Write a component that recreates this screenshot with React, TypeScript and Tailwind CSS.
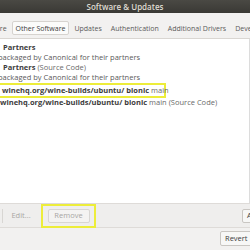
import React from "react";

const font = { fontFamily: '"Open Sans", "DejaVu Sans", sans-serif' };

function Tab({ label, active }: { label: string; active?: boolean }) {
  return (
    <div
      className={
        active
          ? "px-[3px] h-[14px] flex items-center rounded-[2px] border border-[#d6d3cf] bg-[#fbfbfa] text-[#3c3c3c]"
          : "px-[3px] h-[14px] flex items-center border border-transparent text-[#5a5a5a]"
      }
    >
      {label}
    </div>
  );
}

function Source({
  name,
  suffix,
  desc,
}: {
  name: string;
  suffix?: string;
  desc: string;
}) {
  return (
    <div className="flex flex-col">
      <div className="h-[10px] flex items-center pl-[3px]">
        <span className="font-bold text-[#3c3c3c]">{name}</span>
        {suffix && <span className="ml-[2px] text-[#6a6a6a]">{suffix}</span>}
      </div>
      <div className="h-[10px] flex items-center -ml-[2px] text-[#5a5a5a]">{desc}</div>
    </div>
  );
}

export default function App() {
  return (
    <div
      className="w-[250px] h-[250px] overflow-hidden flex flex-col bg-[#f2f1f0] text-[7.5px] leading-none"
      style={font}
    >
      <header className="h-[13px] shrink-0 flex items-center justify-center bg-gradient-to-b from-[#4a4944] to-[#3a3935] text-[#dfdbd2] text-[8px] font-semibold">
        Software &amp; Updates
      </header>

      <nav className="h-[26px] shrink-0 flex items-center gap-[1px] -ml-[53px] pt-[5px] whitespace-nowrap border-b border-[#d9d6d2] text-[7px]">
        <Tab label="Ubuntu Software" />
        <Tab label="Other Software" active />
        <Tab label="Updates" />
        <Tab label="Authentication" />
        <Tab label="Additional Drivers" />
        <Tab label="Developer Options" />
      </nav>

      <section className="flex-1 bg-white flex flex-col pt-[4px] whitespace-nowrap border-r border-[#dcdcdc]">
        <Source name="Partners" desc="packaged by Canonical for their partners" />
        <Source
          name="Partners"
          suffix="(Source Code)"
          desc="packaged by Canonical for their partners"
        />
        <div className="w-[168px] h-[15px] flex items-center -ml-[2px] pl-[2px] border-2 border-[#eded3a]">
          <span className="font-bold text-[#3c3c3c]">winehq.org/wine-builds/ubuntu/ bionic</span>
          <span className="ml-[2px] text-[#6a6a6a]">main</span>
        </div>
        <div className="h-[10px] flex items-center">
          <span className="font-bold text-[#3c3c3c]">winehq.org/wine-builds/ubuntu/ bionic</span>
          <span className="ml-[2px] text-[#6a6a6a]">main (Source Code)</span>
        </div>
      </section>

      <div className="h-[25px] shrink-0 flex items-center bg-[#efeeed] border-t border-b border-[#dedbd8] text-[#a8a6a3]">
        <div className="w-[3px] h-[14px] border-r border-[#d8d6d3]" />
        <div className="ml-[6px] w-[24px] h-[14px] flex items-center justify-center">Edit...</div>
        <div className="ml-[8px] w-[55px] h-[24px] flex items-center justify-center border-2 border-[#eded3a]">
          <div className="w-[42px] h-[14px] flex items-center justify-center rounded-[2px] border border-[#d8d6d3] bg-[#f4f3f2]">
            Remove
          </div>
        </div>
        <div className="ml-auto w-[30px] h-[14px] -mr-[22px] flex items-center pl-[4px] rounded-[2px] border border-[#c9c6c2] bg-[#f7f7f6] text-[#3c3c3c]">
          Add...
        </div>
      </div>

      <div className="h-[22px] shrink-0 flex items-start pt-[3px] justify-end">
        <div className="w-[36px] h-[15px] -mr-[6px] flex items-center pl-[4px] rounded-[2px] border border-[#c9c6c2] bg-[#f7f7f6] text-[#3c3c3c]">
          Revert
        </div>
      </div>
    </div>
  );
}
